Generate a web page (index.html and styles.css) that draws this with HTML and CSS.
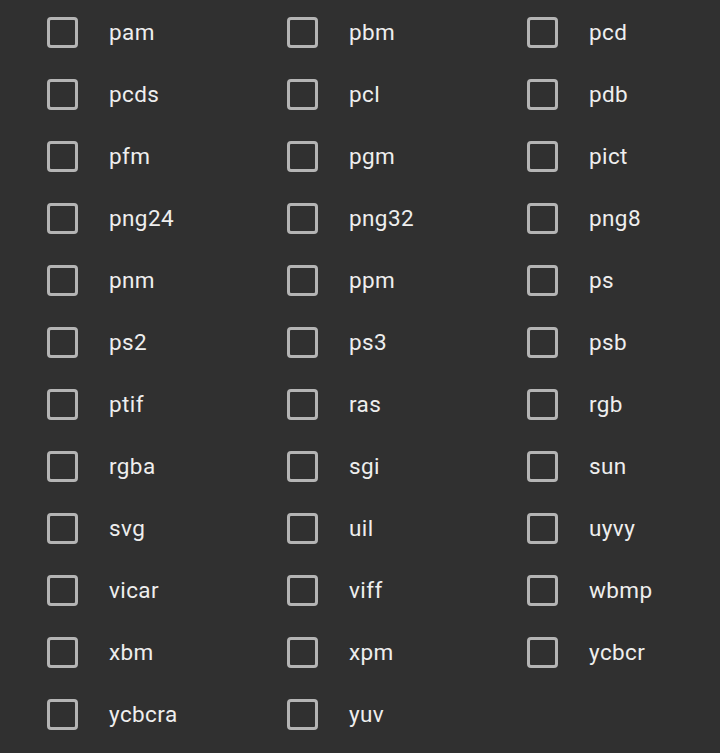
FILE: index.html
```html
<html lang="en">
<head>
    <meta charset="UTF-8">
    <meta name="viewport" content="width=device-width, initial-scale=1.0">
    <link rel="stylesheet" href="styles.css">
    <title>Formats</title>
</head>
<body>

    <main class="format-list">
        <label class="format"><span class="box"></span><span class="name">pam</span></label>
        <label class="format"><span class="box"></span><span class="name">pbm</span></label>
        <label class="format"><span class="box"></span><span class="name">pcd</span></label>
        <label class="format"><span class="box"></span><span class="name">pcds</span></label>
        <label class="format"><span class="box"></span><span class="name">pcl</span></label>
        <label class="format"><span class="box"></span><span class="name">pdb</span></label>
        <label class="format"><span class="box"></span><span class="name">pfm</span></label>
        <label class="format"><span class="box"></span><span class="name">pgm</span></label>
        <label class="format"><span class="box"></span><span class="name">pict</span></label>
        <label class="format"><span class="box"></span><span class="name">png24</span></label>
        <label class="format"><span class="box"></span><span class="name">png32</span></label>
        <label class="format"><span class="box"></span><span class="name">png8</span></label>
        <label class="format"><span class="box"></span><span class="name">pnm</span></label>
        <label class="format"><span class="box"></span><span class="name">ppm</span></label>
        <label class="format"><span class="box"></span><span class="name">ps</span></label>
        <label class="format"><span class="box"></span><span class="name">ps2</span></label>
        <label class="format"><span class="box"></span><span class="name">ps3</span></label>
        <label class="format"><span class="box"></span><span class="name">psb</span></label>
        <label class="format"><span class="box"></span><span class="name">ptif</span></label>
        <label class="format"><span class="box"></span><span class="name">ras</span></label>
        <label class="format"><span class="box"></span><span class="name">rgb</span></label>
        <label class="format"><span class="box"></span><span class="name">rgba</span></label>
        <label class="format"><span class="box"></span><span class="name">sgi</span></label>
        <label class="format"><span class="box"></span><span class="name">sun</span></label>
        <label class="format"><span class="box"></span><span class="name">svg</span></label>
        <label class="format"><span class="box"></span><span class="name">uil</span></label>
        <label class="format"><span class="box"></span><span class="name">uyvy</span></label>
        <label class="format"><span class="box"></span><span class="name">vicar</span></label>
        <label class="format"><span class="box"></span><span class="name">viff</span></label>
        <label class="format"><span class="box"></span><span class="name">wbmp</span></label>
        <label class="format"><span class="box"></span><span class="name">xbm</span></label>
        <label class="format"><span class="box"></span><span class="name">xpm</span></label>
        <label class="format"><span class="box"></span><span class="name">ycbcr</span></label>
        <label class="format"><span class="box"></span><span class="name">ycbcra</span></label>
        <label class="format"><span class="box"></span><span class="name">yuv</span></label>
    </main>

</body>
</html>
```

FILE: styles.css
```css
body {
    background-color: #303030;
    margin: 0;
    font-family: Roboto, "Liberation Sans", sans-serif;
    overflow: hidden;
}

.format-list {
    display: grid;
    grid-template-columns: repeat(3, 240px);
    grid-auto-rows: 62px;
    padding-top: 1px;
}

.format {
    display: flex;
    align-items: center;
    padding-left: 47px;
    gap: 31px;
    cursor: pointer;
}

.box {
    width: 25px;
    height: 25px;
    border: 3px solid #b4b4b4;
    border-radius: 4px;
    flex-shrink: 0;
}

.name {
    color: #eeeeee;
    font-size: 22.5px;
    letter-spacing: 0.4px;
}
```
